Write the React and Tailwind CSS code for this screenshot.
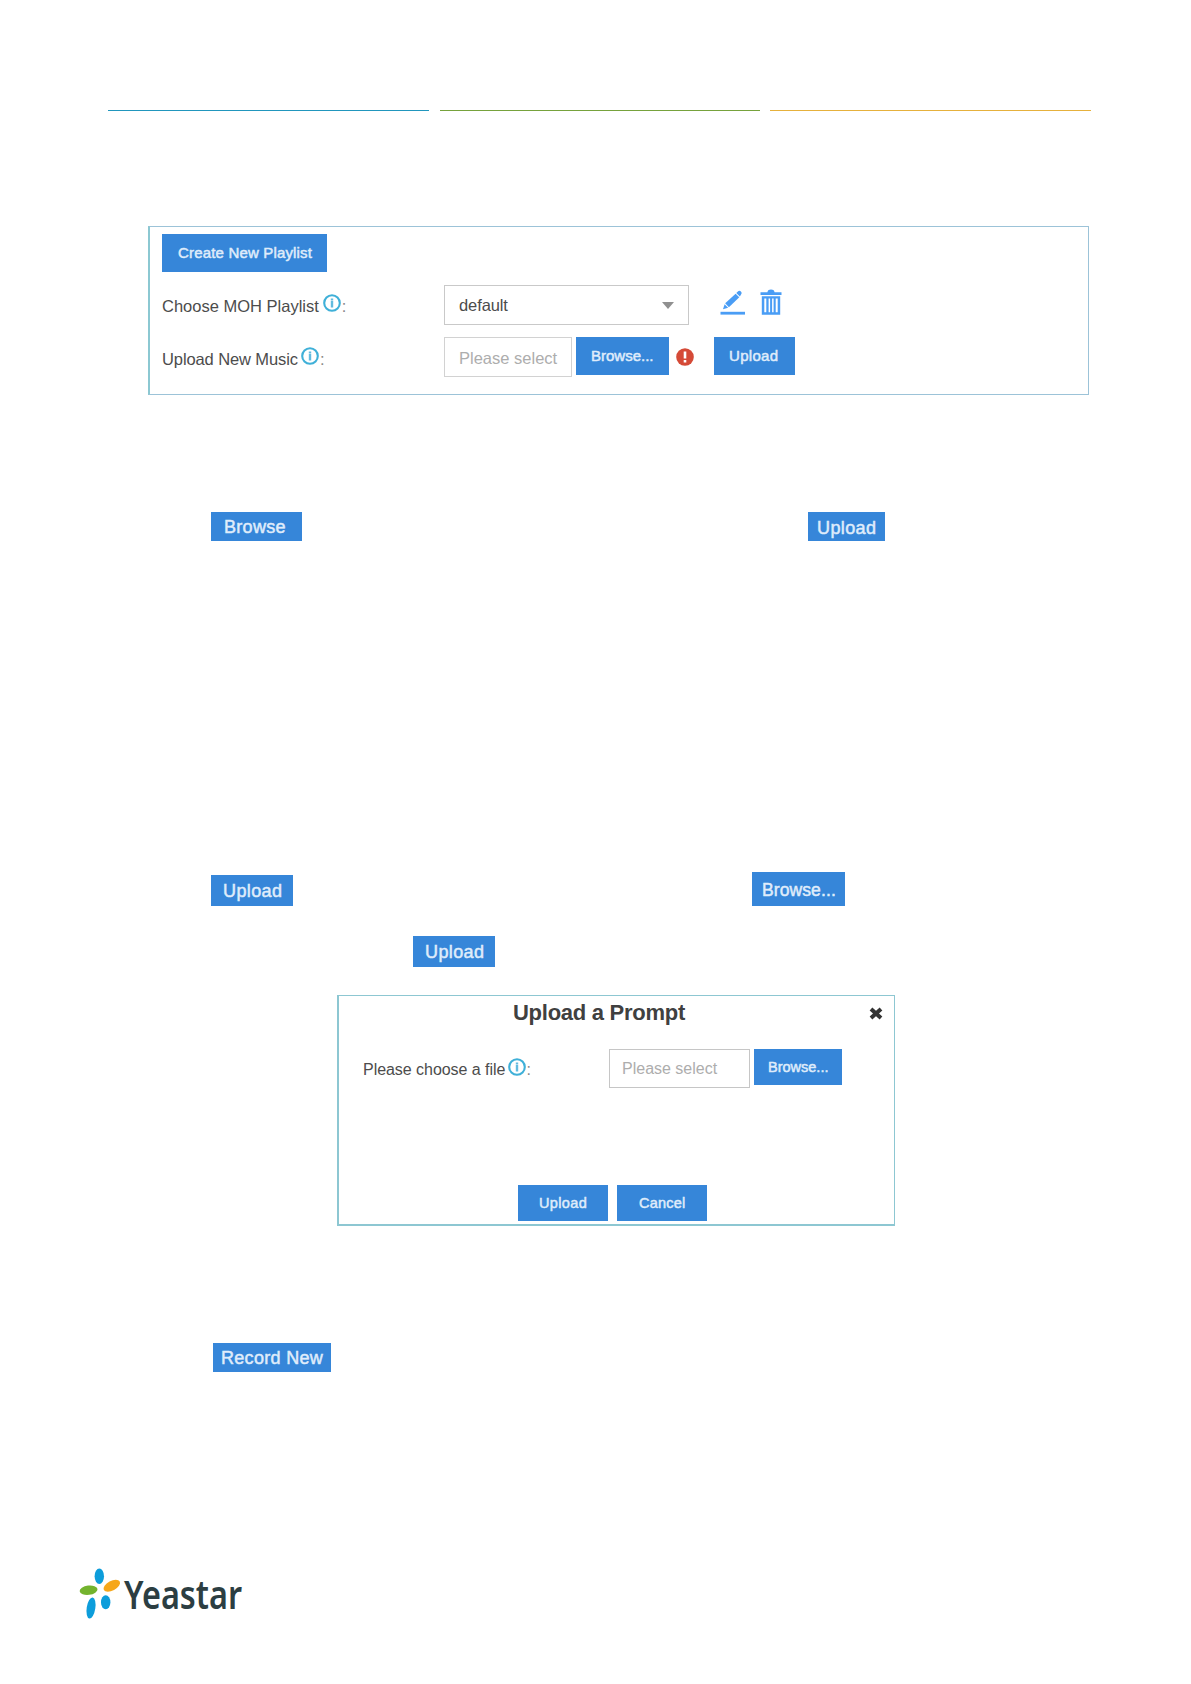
import clsx from "clsx";

function Btn({ className, children }){
  return (
    <button className={clsx("flex shrink-0 justify-start whitespace-nowrap bg-[#3686d9] font-medium leading-5 text-[#e2eefc] [-webkit-text-stroke:0.5px_#dceafa]", className)}>
      {children}
    </button>
  );
}

function InfoIcon({ className }){
  return (
    <svg className={clsx("shrink-0", className)} width="18" height="18" viewBox="0 0 18 18">
      <circle cx="9" cy="9" r="7.8" fill="none" stroke="#3fb0d8" strokeWidth="2.1" />
      <path d="M9 4.4v1.6M9 6.6v7" stroke="#62bbdf" strokeWidth="2.4" />
    </svg>
  );
}

function EditIcon(){
  return (
    <svg className="mt-[5px] shrink-0" width="26" height="26" viewBox="0 0 26 26" fill="#4a9df5">
      <path d="M3 19.2l1.6-5 3.5 3.5z" />
      <path d="M5.2 13.2L15.6 3.7l3.7 3.6L8.9 17.2z" />
      <path d="M16.3 3l1.6-1.5c1-.9 2.1-.8 3 0 .9.9 1 2 .1 3L19.9 6.5z" />
      <rect x="0.5" y="21.8" width="24.5" height="2.8" />
    </svg>
  );
}

function TrashIcon(){
  return (
    <svg className="ml-[14px] mt-[4px] shrink-0" width="22" height="26" viewBox="0 0 22 26" fill="#4a9df5">
      <path d="M7.4 3.2C7.8 1 9 .4 11 .4s3.2.6 3.6 2.8H21.5v2.7H.5V3.2z" />
      <path fillRule="evenodd" d="M1.8 7.3h18.4v18.5H1.8zM4.3 9.6v13.6h2V9.6zm4.3 0v13.6h1.5V9.6zm3.5 0v13.6h1.5V9.6zm3.6 0v13.6h2V9.6z" />
    </svg>
  );
}

function Logo(){
  return (
    <svg className="ml-[78px] overflow-visible" width="180" height="80" viewBox="78 1555 180 80">
      <ellipse cx="99.3" cy="1576.3" rx="4.7" ry="7.7" fill="#0d9ddb" />
      <ellipse cx="88.6" cy="1590.2" rx="9" ry="4.7" transform="rotate(-7 88.6 1590.2)" fill="#73b32e" />
      <ellipse cx="111.8" cy="1585.8" rx="9" ry="4.8" transform="rotate(-28 111.8 1585.8)" fill="#f6a71b" />
      <ellipse cx="91" cy="1608" rx="4.3" ry="10.6" transform="rotate(9 91 1608)" fill="#0d9ddb" />
      <ellipse cx="105.7" cy="1602.3" rx="4.7" ry="7" fill="#0d9ddb" />
      <text x="124" y="1608.5" textLength="118" lengthAdjust="spacingAndGlyphs" fill="#2c3e42" className="font-['Noto_Sans',sans-serif] text-[39px] font-semibold">Yeastar</text>
    </svg>
  );
}

export default function App(){
  return (
    <div className="h-[1684px] w-[1191px] bg-white font-['Liberation_Sans',Arial,sans-serif] text-[#4c4c4c]">
      <header className="ml-[108px] mr-[100px] flex justify-between pt-[110px]">
        <div className="h-px w-[321px] bg-[#2196bd]" />
        <div className="h-px w-[320px] bg-[#76a23c]" />
        <div className="h-px w-[321px] bg-[#e6b13c]" />
      </header>

      <section className="ml-[148px] mt-[115px] h-[169px] w-[941px] border border-l-2 border-[#9cc3d8] border-l-[#8cc8d2] pl-3 pt-[7px]">
        <Btn className="h-[38px] w-[165px] pl-[16px] pt-[9px] text-[15px] tracking-[0.17px]">Create New Playlist</Btn>
        <div className="mt-[13px] flex h-[40px] items-start">
          <div className="flex w-[282px] pt-[9px] text-[16.5px] leading-6">
            <span>Choose MOH Playlist</span>
            <InfoIcon className="ml-1" />
            <span className="pl-px text-[#8a8a8a]">:</span>
          </div>
          <div className="flex h-[40px] w-[245px] items-center justify-between border border-[#c9c9c9] pl-[14px] pr-[14px] text-[16.5px] tracking-[-0.1px]">
            <span>default</span>
            <svg width="12" height="7" viewBox="0 0 12 7"><path d="M0 0h12L6 7z" fill="#909090" /></svg>
          </div>
          <div className="ml-[31px] flex"><EditIcon /><TrashIcon /></div>
        </div>
        <div className="mt-[12px] flex items-start">
          <div className="flex w-[282px] pt-[10px] text-[16.5px] leading-6">
            <span className="tracking-[-0.1px]">Upload New Music</span>
            <InfoIcon className="ml-[3px]" />
            <span className="pl-px text-[#8a8a8a]">:</span>
          </div>
          <div className="h-[40px] w-[128px] whitespace-nowrap border border-[#d2d2d2] pl-[14px] pt-[8px] text-[16.5px] leading-6 text-[#adadad]">Please select</div>
          <Btn className="ml-1 h-[38px] w-[93px] pl-[15px] pt-[9px] text-[15px]">Browse...</Btn>
          <svg className="ml-[7px] mt-[11px] shrink-0" width="18" height="18" viewBox="0 0 18 18">
            <circle cx="9" cy="9" r="8.8" fill="#d54a37" />
            <path d="M9 3.5v7M9 12v2.6" stroke="#fff" strokeWidth="2.6" />
          </svg>
          <Btn className="ml-[20px] h-[38px] w-[81px] pl-[15px] pt-[9px] text-[15px] tracking-[0.3px]">Upload</Btn>
        </div>
      </section>

      <div className="ml-[211px] mt-[117px] flex w-[674px] justify-between">
        <Btn className="h-[29px] w-[91px] pl-[13px] pt-[5px] text-[18px] tracking-[0.3px]">Browse</Btn>
        <Btn className="h-[29px] w-[77px] pl-[9px] pt-[6px] text-[18px] tracking-[0.4px]">Upload</Btn>
      </div>

      <div className="ml-[211px] mt-[331px] flex w-[634px] items-end justify-between">
        <Btn className="h-[31px] w-[82px] pl-[12px] pt-[6px] text-[18px] tracking-[0.4px]">Upload</Btn>
        <Btn className="h-[34px] w-[93px] pl-[10px] pt-[8px] text-[17.5px] tracking-[0.1px]">Browse...</Btn>
      </div>
      <Btn className="ml-[413px] mt-[30px] h-[31px] w-[82px] pl-[12px] pt-[6px] text-[18px] tracking-[0.4px]">Upload</Btn>

      <section className="ml-[337px] mt-[28px] h-[231px] w-[558px] border border-b-2 border-l-2 border-[#8dc7d2]">
        <div className="flex items-start justify-between pl-[174px] pr-[11px] pt-[4px]">
          <h2 className="text-[22px] font-bold leading-[26px] tracking-[-0.27px] text-[#404040]">Upload a Prompt</h2>
          <svg className="mt-[7px]" width="14" height="13" viewBox="0 0 14 13"><path d="M2 2l10 9M12 2l-10 9" stroke="#333" strokeWidth="4" /></svg>
        </div>
        <div className="mt-[23px] flex items-start pl-[24px]">
          <div className="flex w-[246px] pt-[9px] text-[16px] leading-6">
            <span className="tracking-[-0.04px]">Please choose a file</span>
            <InfoIcon className="ml-[3px]" />
            <span className="text-[#8a8a8a]">:</span>
          </div>
          <div className="h-[39px] w-[141px] border border-[#c6c6c6] pl-[12px] pt-[7px] text-[16px] leading-6 text-[#adadad]">Please select</div>
          <Btn className="ml-1 h-[36px] w-[88px] pl-[14px] pt-[8px] text-[14.5px]">Browse...</Btn>
        </div>
        <div className="mt-[97px] flex gap-[9px] pl-[179px]">
          <Btn className="h-[36px] w-[90px] pl-[21px] pt-[8px] text-[14.5px] tracking-[0.35px]">Upload</Btn>
          <Btn className="h-[36px] w-[90px] pl-[22px] pt-[8px] text-[14.5px] tracking-[0.2px]">Cancel</Btn>
        </div>
      </section>

      <Btn className="ml-[213px] mt-[117px] h-[29px] w-[118px] pl-[8px] pt-[5px] text-[18px] tracking-[0.3px]">Record New</Btn>

      <footer className="mt-[183px]"><Logo /></footer>
    </div>
  );
}
